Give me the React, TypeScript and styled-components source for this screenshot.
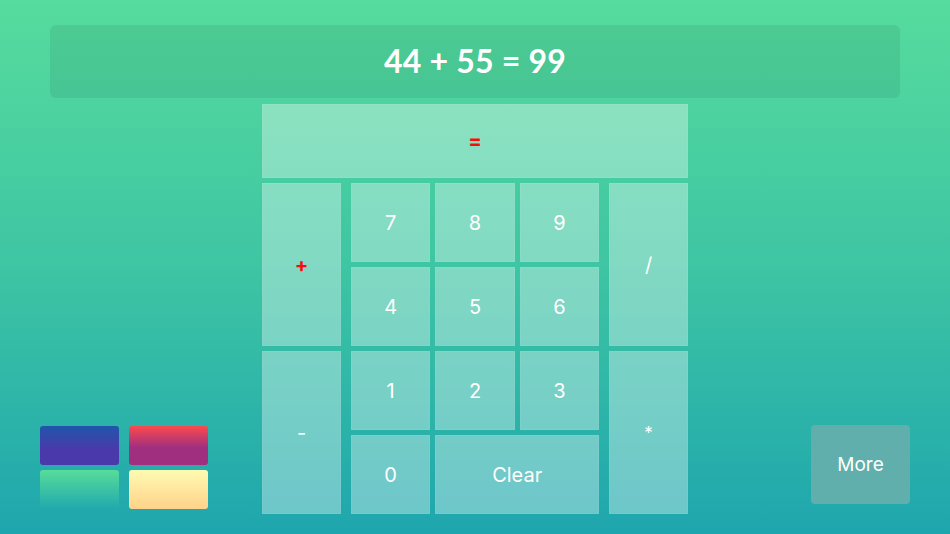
import React from "react";
import styled, { createGlobalStyle } from "styled-components";

const GlobalStyle = createGlobalStyle`
  html, body {
    margin: 0;
    padding: 0;
    width: 100%;
    height: 100%;
  }
  #root {
    width: 100%;
    height: 100%;
  }
  * { box-sizing: border-box; }
`;

const Page = styled.div`
  width: 950px;
  height: 534px;
  padding: 25px 40px 20px;
  display: flex;
  flex-direction: column;
  gap: 6px;
  background: linear-gradient(to bottom, #56dc9d 0%, #3ec5a3 50%, #1ea6ae 100%);
  font-family: Inter, "Liberation Sans", sans-serif;
  overflow: hidden;
`;

const Display = styled.div`
  margin: 0 10px;
  height: 73px;
  padding-bottom: 3px;
  border-radius: 6px;
  background: rgba(10, 60, 40, 0.09);
  display: flex;
  align-items: center;
  justify-content: center;
  color: #ffffff;
  font-family: Lato, "Liberation Sans", sans-serif;
  font-weight: 700;
  font-size: 32px;
  letter-spacing: 0.2px;
`;

const Main = styled.div`
  display: grid;
  grid-template-columns: 1fr 426px 1fr;
  align-items: end;
`;

const Swatches = styled.div`
  justify-self: start;
  display: grid;
  grid-template-columns: 79px 79px;
  grid-auto-rows: 39px;
  column-gap: 10px;
  row-gap: 5px;
  margin-bottom: 5px;
`;

const Swatch = styled.div<{ $from: string; $to: string; $stop?: string }>`
  border-radius: 3px;
  background: linear-gradient(to bottom, ${(p) => p.$from} 0%, ${(p) => p.$to} ${(p) => p.$stop ?? "100%"});
`;

const Keypad = styled.div`
  display: flex;
  flex-direction: column;
  gap: 5px;
`;

const Key = styled.button<{ $red?: boolean; $small?: boolean }>`
  border: none;
  margin: 0;
  padding: 0;
  background: rgba(255, 255, 255, 0.35);
  box-shadow: inset 0 0 0 1px rgba(255, 255, 255, 0.06);
  color: ${(p) => (p.$red ? "#ff0a0a" : "#ffffff")};
  font-family: Inter, "Liberation Sans", sans-serif;
  font-size: ${(p) => (p.$small ? "17px" : "20px")};
  font-weight: ${(p) => (p.$red ? 700 : 400)};
  display: flex;
  align-items: center;
  justify-content: center;
  cursor: pointer;
`;

const EqualsKey = styled(Key)`
  height: 74px;
`;

const Body = styled.div`
  display: flex;
  gap: 10px;
  height: 331px;
`;

const SideCol = styled.div`
  width: 79px;
  display: flex;
  flex-direction: column;
  gap: 5px;
`;

const TallKey = styled(Key)`
  flex: 1;
`;

const NumGrid = styled.div`
  flex: 1;
  display: grid;
  grid-template-columns: repeat(3, 1fr);
  grid-template-rows: repeat(4, 1fr);
  gap: 5px;
`;

const WideKey = styled(Key)`
  grid-column: span 2;
`;

const MoreButton = styled.button`
  justify-self: end;
  width: 99px;
  height: 79px;
  margin-bottom: 10px;
  border: none;
  border-radius: 4px;
  background: #60afac;
  color: #ffffff;
  font-family: Inter, "Liberation Sans", sans-serif;
  font-size: 19px;
  display: flex;
  align-items: center;
  justify-content: center;
`;

export default function App() {
  const nums = ["7", "8", "9", "4", "5", "6", "1", "2", "3"];
  return (
    <>
      <GlobalStyle />
      <Page>
        <Display>44 + 55 = 99</Display>
        <Main>
          <Swatches>
            <Swatch $from="#1f56aa" $to="#4a39ab" $stop="60%" />
            <Swatch $from="#fb4a4c" $to="#a12f80" $stop="55%" />
            <Swatch $from="#57dc9b" $to="#20a9ad" />
            <Swatch $from="#fffbb2" $to="#ffd28a" />
          </Swatches>
          <Keypad>
            <EqualsKey $red>=</EqualsKey>
            <Body>
              <SideCol>
                <TallKey $red>+</TallKey>
                <TallKey>-</TallKey>
              </SideCol>
              <NumGrid>
                {nums.map((n) => (
                  <Key key={n}>{n}</Key>
                ))}
                <Key>0</Key>
                <WideKey>Clear</WideKey>
              </NumGrid>
              <SideCol>
                <TallKey>/</TallKey>
                <TallKey $small>*</TallKey>
              </SideCol>
            </Body>
          </Keypad>
          <MoreButton>More</MoreButton>
        </Main>
      </Page>
    </>
  );
}
